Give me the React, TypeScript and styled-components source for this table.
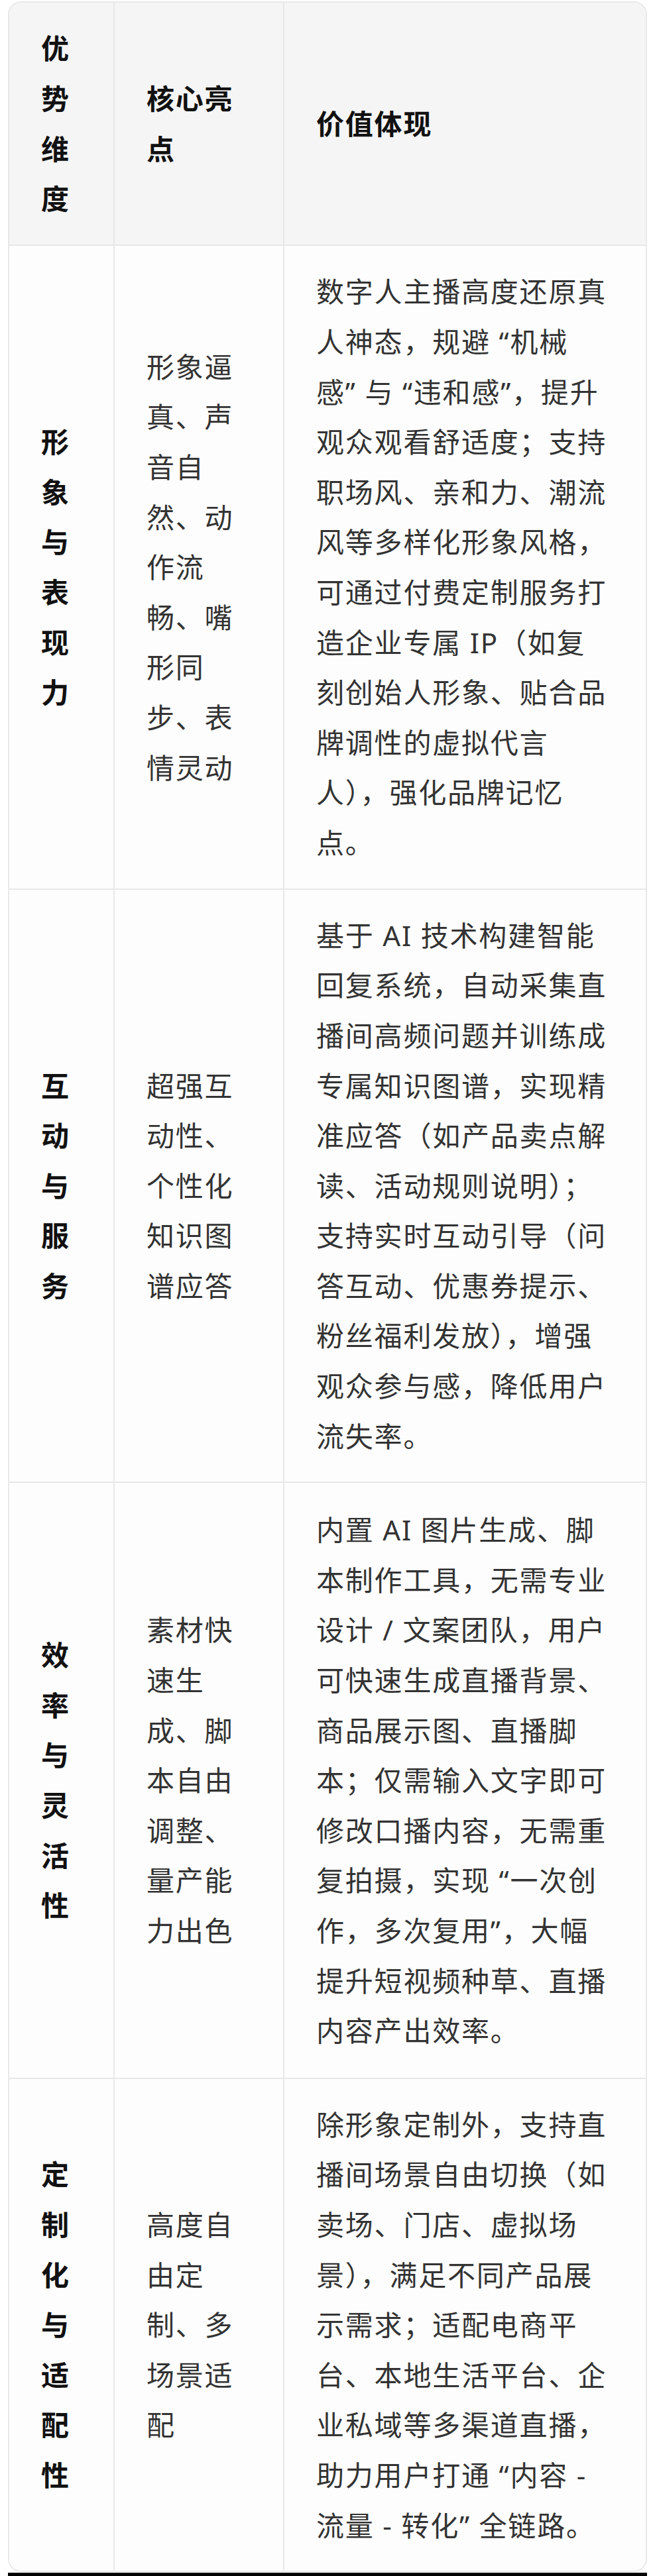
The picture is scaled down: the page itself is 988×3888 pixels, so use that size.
import React from "react";
import styled, { createGlobalStyle } from "styled-components";

const GlobalStyle = createGlobalStyle`
  html, body {
    margin: 0;
    padding: 0;
    background: #ffffff;
  }
  body {
    font-family: "Noto Sans", "Noto Sans CJK SC", sans-serif;
    -webkit-font-smoothing: antialiased;
  }
`;

const Page = styled.div`
  display: flex;
  flex-direction: column;
  padding: 2px 12px 0;
`;

const Table = styled.div`
  display: flex;
  flex-direction: column;
  border: 2px solid #e8e8e8;
  border-radius: 20px;
  overflow: hidden;
`;

const Row = styled.div<{ $h: number; $head?: boolean }>`
  display: grid;
  grid-template-columns: 157px 256px 1fr;
  height: ${(p) => p.$h}px;
  background: ${(p) => (p.$head ? "#f5f5f5" : "#fdfdfd")};
  & + & {
    border-top: 2px solid #e8e8e8;
  }
`;

type Kind = "head" | "dim" | "text";

const Cell = styled.div<{ $kind: Kind }>`
  display: flex;
  flex-direction: column;
  justify-content: center;
  padding-left: 48px;
  font-size: 42px;
  line-height: 75.6px;
  letter-spacing: 1.8px;
  font-weight: ${(p) => (p.$kind === "text" ? 400 : 700)};
  color: ${(p) => (p.$kind === "text" ? "#333333" : "#111111")};
  & + & {
    border-left: 2px solid #e8e8e8;
  }
`;

const Line = styled.span`
  display: block;
  white-space: nowrap;
`;

const BottomBar = styled.div`
  height: 5px;
  margin-top: 1px;
  background: #000000;
`;

type RowData = {
  h: number;
  dim: string[];
  core: string[];
  value: string[];
};

const header: RowData = {
  h: 365,
  dim: ["优", "势", "维", "度"],
  core: ["核心亮", "点"],
  value: ["价值体现"],
};

const rows: RowData[] = [
  {
    h: 970,
    dim: ["形", "象", "与", "表", "现", "力"],
    core: ["形象逼", "真、声", "音自", "然、动", "作流", "畅、嘴", "形同", "步、表", "情灵动"],
    value: [
      "数字人主播高度还原真",
      "人神态，规避 “机械",
      "感” 与 “违和感”，提升",
      "观众观看舒适度；支持",
      "职场风、亲和力、潮流",
      "风等多样化形象风格，",
      "可通过付费定制服务打",
      "造企业专属 IP（如复",
      "刻创始人形象、贴合品",
      "牌调性的虚拟代言",
      "人），强化品牌记忆",
      "点。",
    ],
  },
  {
    h: 893,
    dim: ["互", "动", "与", "服", "务"],
    core: ["超强互", "动性、", "个性化", "知识图", "谱应答"],
    value: [
      "基于 AI 技术构建智能",
      "回复系统，自动采集直",
      "播间高频问题并训练成",
      "专属知识图谱，实现精",
      "准应答（如产品卖点解",
      "读、活动规则说明）；",
      "支持实时互动引导（问",
      "答互动、优惠券提示、",
      "粉丝福利发放），增强",
      "观众参与感，降低用户",
      "流失率。",
    ],
  },
  {
    h: 898,
    dim: ["效", "率", "与", "灵", "活", "性"],
    core: ["素材快", "速生", "成、脚", "本自由", "调整、", "量产能", "力出色"],
    value: [
      "内置 AI 图片生成、脚",
      "本制作工具，无需专业",
      "设计 / 文案团队，用户",
      "可快速生成直播背景、",
      "商品展示图、直播脚",
      "本；仅需输入文字即可",
      "修改口播内容，无需重",
      "复拍摄，实现 “一次创",
      "作，多次复用”，大幅",
      "提升短视频种草、直播",
      "内容产出效率。",
    ],
  },
  {
    h: 742,
    dim: ["定", "制", "化", "与", "适", "配", "性"],
    core: ["高度自", "由定", "制、多", "场景适", "配"],
    value: [
      "除形象定制外，支持直",
      "播间场景自由切换（如",
      "卖场、门店、虚拟场",
      "景），满足不同产品展",
      "示需求；适配电商平",
      "台、本地生活平台、企",
      "业私域等多渠道直播，",
      "助力用户打通 “内容 -",
      "流量 - 转化” 全链路。",
    ],
  },
];

const Lines: React.FC<{ items: string[] }> = ({ items }) => (
  <>
    {items.map((t, i) => (
      <Line key={i}>{t}</Line>
    ))}
  </>
);

const TableRow: React.FC<{ data: RowData; head?: boolean }> = ({ data, head }) => (
  <Row $h={data.h} $head={head}>
    <Cell $kind={head ? "head" : "dim"}>
      <Lines items={data.dim} />
    </Cell>
    <Cell $kind={head ? "head" : "text"}>
      <Lines items={data.core} />
    </Cell>
    <Cell $kind={head ? "head" : "text"}>
      <Lines items={data.value} />
    </Cell>
  </Row>
);

export default function App() {
  return (
    <>
      <GlobalStyle />
      <Page>
        <Table>
          <TableRow data={header} head />
          {rows.map((r, i) => (
            <TableRow key={i} data={r} />
          ))}
        </Table>
        <BottomBar />
      </Page>
    </>
  );
}
